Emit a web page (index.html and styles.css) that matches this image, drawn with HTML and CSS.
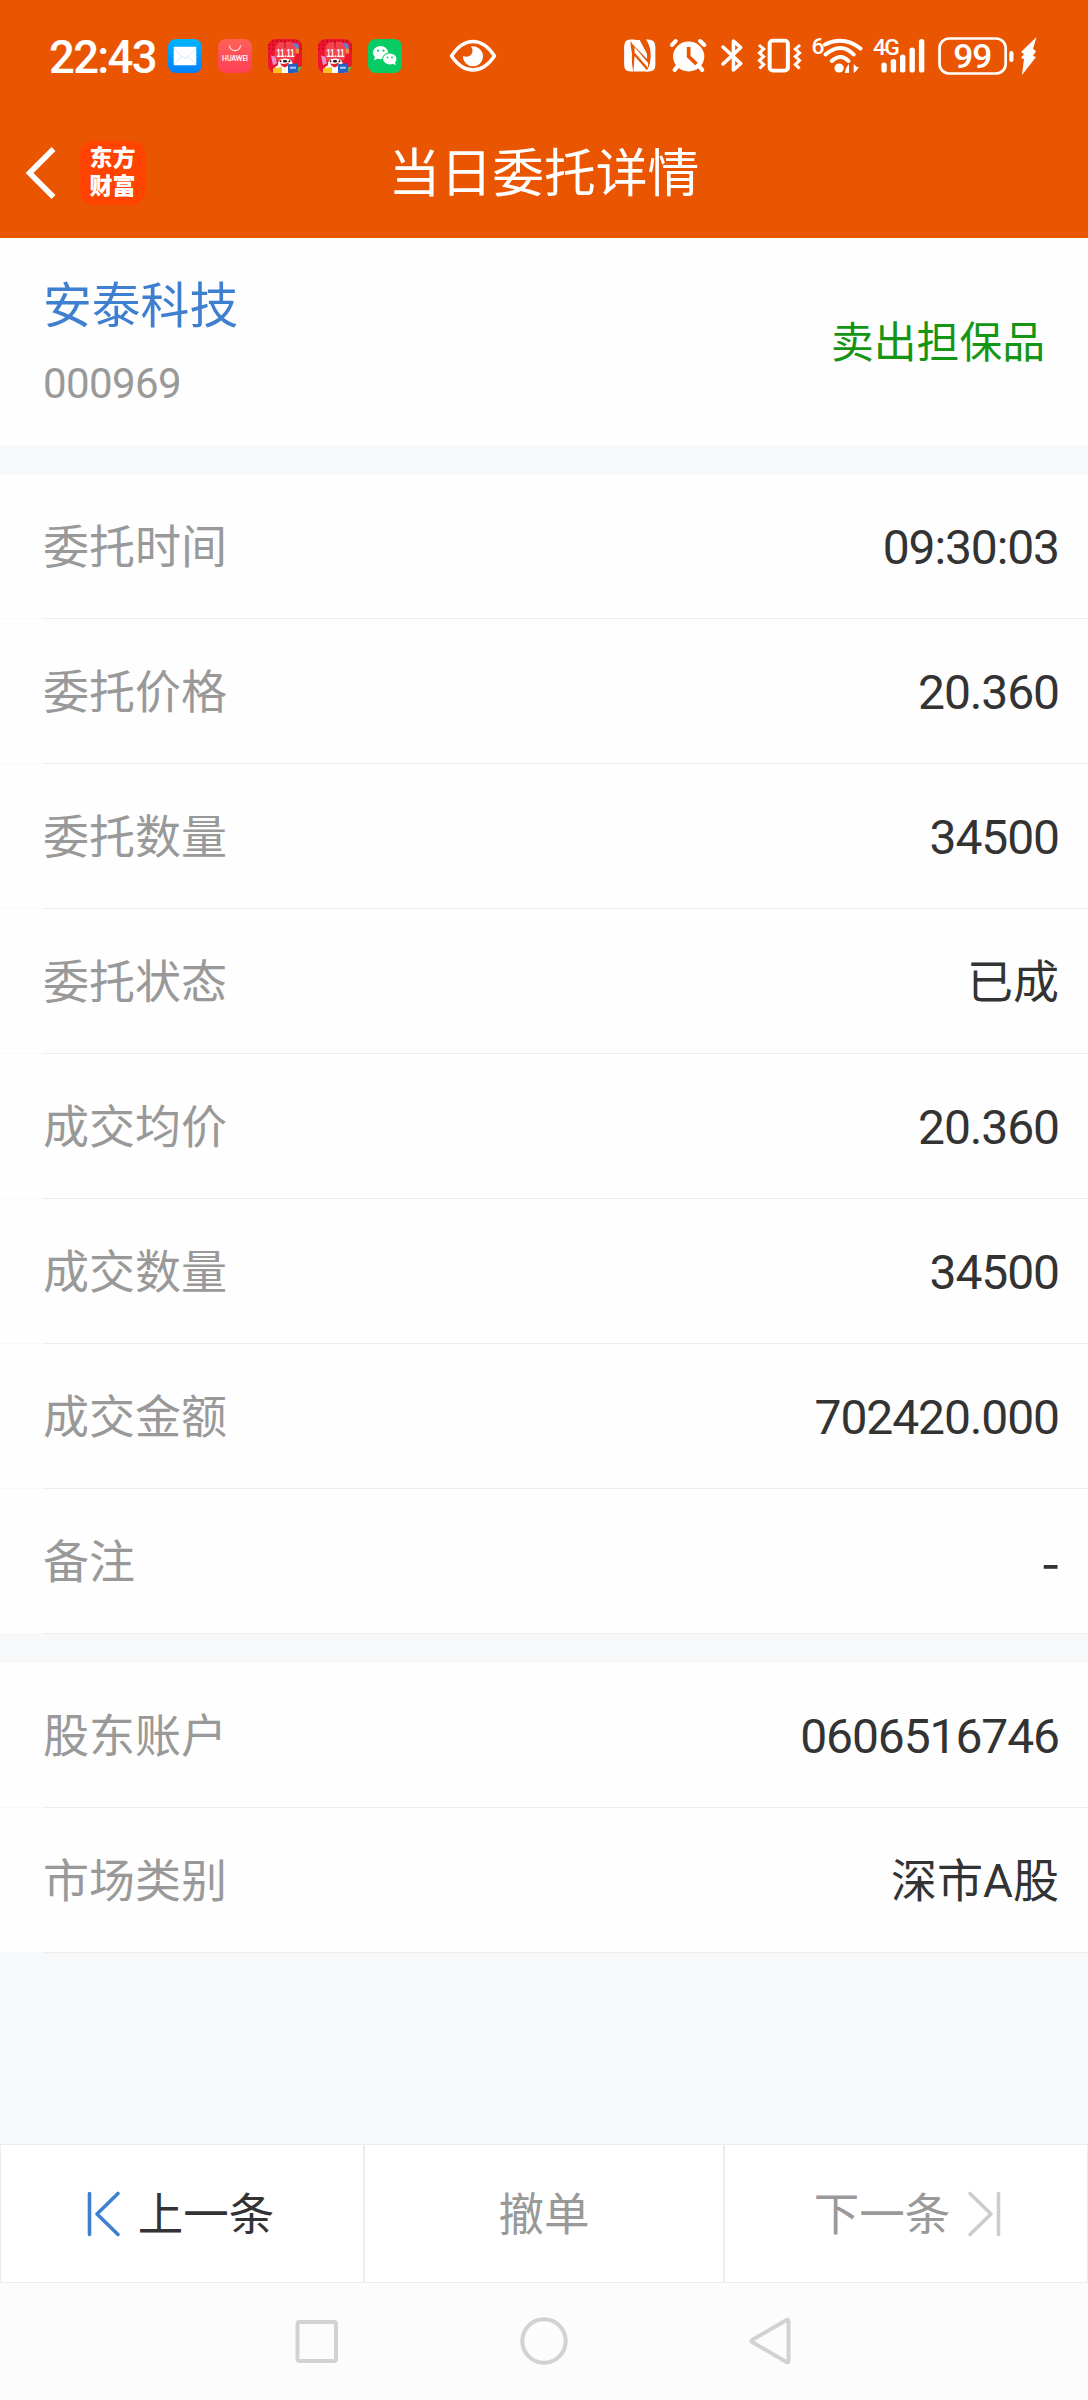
FILE: index.html
```html
<!DOCTYPE html>
<html lang="zh-CN">
<head>
  <meta charset="UTF-8">
  <title>当日委托详情</title>
  <link rel="stylesheet" href="styles.css">
</head>
<body>
  <header>
    <div class="status-bar">
      <span class="clock">22:43</span>
      <div class="apps">
        <svg width="34" height="34" viewBox="0 0 34 35" preserveAspectRatio="none">
          <defs><linearGradient id="mail" x1="0" y1="0" x2="0" y2="1"><stop offset="0" stop-color="#00b4fc"/><stop offset="1" stop-color="#0480fa"/></linearGradient></defs>
          <rect width="34" height="35" rx="8" fill="url(#mail)"/>
          <rect x="5.5" y="8" width="23" height="19" rx="1" fill="#fff"/>
          <path d="M6 10l9 9q2 2 4 0l9-9M6 26l8-8M28 26l-8-8" fill="none" stroke="#cfe6fb"/>
          <path d="M5.5 9v18M28.5 9v18" stroke="#0a9afb" stroke-dasharray="1 1.5"/>
        </svg>
        <svg width="34" height="34" viewBox="0 0 34 35" preserveAspectRatio="none">
          <defs><linearGradient id="store" x1="0" y1="0" x2="0" y2="1"><stop offset="0" stop-color="#ff6058"/><stop offset="1" stop-color="#ff4055"/></linearGradient></defs>
          <rect width="34" height="35" rx="8" fill="url(#store)"/>
          <path d="M11.5 6.5a5.5 5.5 0 0 0 11 0" fill="none" stroke="#ffe4e0" stroke-width="1.1"/>
          <text x="4" y="23" class="store-text" textLength="26" lengthAdjust="spacingAndGlyphs">HUAWEI</text>
        </svg>
        <svg width="34" height="34" viewBox="0 0 34 35" preserveAspectRatio="none">
          <defs>
            <clipPath id="tile"><rect width="34" height="35" rx="8"/></clipPath>
            <g id="sale" clip-path="url(#tile)">
              <rect width="34" height="35" fill="#ee1530"/>
              <path d="M0 2h34M0 6h34M0 10h34" stroke="#c80f20" stroke-width="2" stroke-dasharray="2 2"/>
              <path d="M25 4l5 1 1 7-5 2z" fill="#4c8ce0"/>
              <path d="M26 10h5v5h-5z" fill="#f58a2c"/>
              <path d="M7 22q-1-10 1-15 3-6 9-3 7-4 10 4 2 6-1 14z" fill="#f4434c"/>
              <path d="M17 3v6" stroke="#b90f25"/>
              <path d="M3 17l4 1 2 7-4 2z" fill="#ec8fc8"/>
              <path d="M5 35q0-6 5-8-1-7 7-7t8 7q4 3 4 8z" fill="#fff"/>
              <text x="17.5" y="18.5" class="sale-text" textLength="18" lengthAdjust="spacingAndGlyphs">11.11</text>
              <circle cx="12.5" cy="23" r="1" fill="#2a1518"/>
              <circle cx="21.5" cy="23" r="1" fill="#2a1518"/>
              <ellipse cx="17" cy="23" rx="2.2" ry="1.3" fill="#2a1518"/>
              <path d="M12 25q5 2 9-1-1 5-4 5t-5-4z" fill="#e3242c"/>
              <path d="M5 30l9-1v6H5z" fill="#fbc31d"/>
              <path d="M20 26l10-1v10H20z" fill="#2461c4"/>
              <path d="M22 29.500h6" stroke="#a8cdf5" stroke-width="2"/>
              <path d="M30 29l4-1v5l-4 2z" fill="#69b345"/>
            </g>
          </defs>
          <use href="#sale"/>
        </svg>
        <svg width="34" height="34" viewBox="0 0 34 35" preserveAspectRatio="none"><use href="#sale"/></svg>
        <svg width="34" height="34" viewBox="0 0 34 35" preserveAspectRatio="none">
          <rect width="34" height="35" rx="8" fill="#07cc66"/>
          <path d="M7 18l-1 4 4-2z" fill="#fff"/>
          <ellipse cx="12.5" cy="14" rx="7.6" ry="6.8" fill="#fff"/>
          <ellipse cx="21.8" cy="20.5" rx="7.6" ry="6.6" fill="#07cc66"/>
          <ellipse cx="21.8" cy="20.5" rx="6.7" ry="5.7" fill="#fff"/>
          <path d="M24 25l3.500 2-.5-4z" fill="#fff"/>
          <g fill="#07cc66"><circle cx="10" cy="12" r="1.1"/><circle cx="15.5" cy="12" r="1.1"/><circle cx="19.5" cy="19" r=".9"/><circle cx="24" cy="19" r=".9"/></g>
        </svg>
      </div>
      <svg class="eye" width="48" height="34" viewBox="0 0 48 34">
        <path d="M2.500 17Q12 2.500 24 2.500T45.500 17Q36 31 24 31T2.500 17z" fill="none" stroke="#fff" stroke-width="3.4" stroke-linejoin="round"/>
        <path d="M22 7.500a10 10 0 1 1-8 9.500q5 2 8-1 3-4 0-8.500z" fill="#fff"/>
      </svg>

      <div class="system">
        <svg class="signals" width="406" height="44" viewBox="0 0 390 44" preserveAspectRatio="none">
          <!-- nfc -->
          <path d="M14 6.500H9q-6 0-6 7v18q0 7 6 7h3q-2-7-1.500-18Q9 11 9 9z" fill="#fff"/>
          <path d="M24 6.500h2q7 0 7 7v18q0 7-6 7h-3q4-5 4.500-14 .5-11-4.500-18z" fill="#fff"/>
          <path d="M10 7h8l7 14v5L10 10zM13 14l13 16v5L13 19.500zM13 23l13 15.500H12z" fill="#fff"/>
          <!-- alarm -->
          <path d="M49 12l3.500-4M80 12l-4-4M51.500 37l3-4M78 37l-3-4" fill="none" stroke="#fff" stroke-width="4" stroke-linecap="round"/>
          <circle cx="65" cy="23.500" r="15" fill="#fff"/>
          <path d="M65 14v9.500l7.500 7.500" fill="none" stroke="#ea5502" stroke-width="3.6"/>
          <!-- bluetooth -->
          <path d="M98 14l17 16.500-7 6.500V8l7 6.500-17 16.500" fill="none" stroke="#fff" stroke-width="3.4" stroke-linecap="round" stroke-linejoin="round"/>
          <!-- vibrate -->
          <rect x="142.800" y="7.600" width="17.500" height="30" rx="3" fill="none" stroke="#fff" stroke-width="3.8"/>
          <path d="M132.500 12l4.500 4-4 4 4 3.500-4 4 4 4-4 4M172 12l-4.500 4 4 4-4 3.500 4 4-4 4 4 4" fill="none" stroke="#fff" stroke-width="3"/>
          <!-- wifi -->
          <text x="183" y="20.500" class="mini">6</text>
          <path d="M196 11.500q18-9 34 4M196.500 21.500q15-13 27 0M202.500 28q9-8 16 0" fill="none" stroke="#fff" stroke-width="4" stroke-linecap="round"/>
          <circle cx="209.500" cy="35" r="4.500" fill="#fff"/>
          <path d="M219 31v9h-4q1-6 4-9zM223.500 31v9q3-2 5-6h-2z" fill="#fff"/>
          <!-- signal -->
          <text x="242" y="22" class="mini">4G</text>
          <path d="M252.700 32v5M261.700 28.500v8.500M270.600 24v13M279.700 17v20M288.800 8.500v28.500" stroke="#fff" stroke-width="5.2" stroke-linecap="round"/>
          <!-- battery -->
          <rect x="306" y="5.500" width="63.500" height="35" rx="9.500" fill="none" stroke="#fff" stroke-width="2.6"/>
          <path d="M375 20v7" stroke="#fff" stroke-width="4" stroke-linecap="round"/>
          <text x="337.500" y="35" class="level">99</text>
        </svg>
        <svg class="bolt" width="17" height="38" viewBox="0 0 17 38"><path d="M16.500 0L1 15l3 2-3 4 3 1-2 16 14-18-3-1 3-5-3-2z" fill="#fff"/></svg>
      </div>
    </div>

    <div class="title-bar">
      <svg class="back" width="32" height="54" viewBox="0 0 32 54"><path d="M28.500 3L4.500 27l24 24" fill="none" stroke="#fff" stroke-width="5.5"/></svg>
      <div class="logo">东方<br>财富</div>
      <h1>当日委托详情</h1>
    </div>
  </header>

  <section class="stock">
    <div>
      <div class="stock-name">安泰科技</div>
      <div class="stock-code">000969</div>
    </div>
    <div class="side">卖出担保品</div>
  </section>

  <section class="rows">
    <div class="row"><span class="label">委托时间</span><span class="value">09:30:03</span></div>
    <div class="row"><span class="label">委托价格</span><span class="value">20.360</span></div>
    <div class="row"><span class="label">委托数量</span><span class="value">34500</span></div>
    <div class="row"><span class="label">委托状态</span><span class="value text">已成</span></div>
    <div class="row"><span class="label">成交均价</span><span class="value">20.360</span></div>
    <div class="row"><span class="label">成交数量</span><span class="value">34500</span></div>
    <div class="row"><span class="label">成交金额</span><span class="value">702420.000</span></div>
    <div class="row"><span class="label">备注</span><span class="value dash">-</span></div>
  </section>

  <section class="rows">
    <div class="row"><span class="label">股东账户</span><span class="value">0606516746</span></div>
    <div class="row"><span class="label">市场类别</span><span class="value text">深市A股</span></div>
  </section>

  <div class="actions">
    <div class="action prev">
      <svg width="36" height="48" viewBox="0 0 36 48"><path d="M3.500 3.500v41M32 3.500L11 24l21 20.500" fill="none" stroke="#3e7fd0" stroke-width="3.6" stroke-linecap="round" stroke-linejoin="round"/></svg>
      <span>上一条</span>
    </div>
    <div class="action"><span>撤单</span></div>
    <div class="action next">
      <span>下一条</span>
      <svg width="36" height="48" viewBox="0 0 36 48"><path d="M32.500 3.500v41M4 3.500L25 24 4 44.500" fill="none" stroke="#ccc" stroke-width="3.6" stroke-linecap="round" stroke-linejoin="round"/></svg>
    </div>
  </div>

  <nav>
    <svg width="48" height="48" viewBox="0 0 48 48"><rect x="4.500" y="5" width="38.500" height="39" rx="2"/></svg>
    <svg width="48" height="48" viewBox="0 0 48 48"><circle cx="24" cy="24" r="21.700"/></svg>
    <svg width="48" height="48" viewBox="0 0 48 48"><path d="M41.500 4v40q0 2-2 1L5 25q-1-1 0-2L39.500 3q2-1 2 1z"/></svg>
  </nav>
</body>
</html>
```
FILE: styles.css
```css
* {
  box-sizing: border-box;
}

body {
  margin: 0;
  height: 2400px;
  display: flex;
  flex-direction: column;
  background: #f7f8fa;
  color: #333;
  font-family: Roboto, "Noto Sans CJK SC", sans-serif;
  overflow: hidden;
}

header {
  height: 238px;
  background: #ea5502;
  color: #fff;
}

.status-bar {
  height: 112px;
  display: flex;
  align-items: center;
  padding-left: 49px;
}

.clock {
  width: 112px;
  padding-top: 2px;
  font-size: 45.5px;
  font-weight: 500;
  letter-spacing: -1.7px;
}

.apps {
  display: flex;
  gap: 16px;
  padding-left: 7px;
}

.store-text {
  font: bold 7px Lato, sans-serif;
  fill: #fff;
}

.sale-text {
  font: bold 11px "Liberation Sans", sans-serif;
  fill: #fff;
  text-anchor: middle;
}

.eye {
  margin-left: 47px;
}

.system {
  display: flex;
  align-items: center;
  margin-left: 124px;
}

.mini {
  font: 500 22px Roboto, sans-serif;
  letter-spacing: -1.5px;
  fill: #fff;
}

.level {
  font: 500 34px Roboto, sans-serif;
  letter-spacing: -1px;
  fill: #fff;
  text-anchor: middle;
}

.signals {
  margin-bottom: 2px;
}

.bolt {
  margin-left: -7px;
}

.title-bar {
  position: relative;
  height: 121px;
  display: flex;
  align-items: center;
  padding-left: 25px;
}

.logo {
  width: 65px;
  height: 64px;
  margin-left: 23px;
  padding-top: 4px;
  border-radius: 13px;
  background: #ff4402;
  font-size: 23px;
  font-weight: 900;
  line-height: 28px;
  text-align: center;
}

h1 {
  position: absolute;
  left: 0;
  right: 0;
  margin: 0;
  padding-top: 5px;
  font-size: 51.8px;
  font-weight: 400;
  line-height: 60px;
  text-align: center;
}

.stock {
  height: 207px;
  display: flex;
  justify-content: space-between;
  align-items: center;
  padding: 0 43px;
  background: #fefefe;
}

.stock-name {
  padding-top: 6px;
  color: #3e7fd0;
  font-size: 48.8px;
  line-height: 70px;
}

.stock-code {
  margin-top: 9px;
  color: #999;
  font-size: 42px;
  line-height: 66px;
  letter-spacing: -0.6px;
}

.side {
  padding-bottom: 6px;
  color: #149614;
  font-size: 42.8px;
}

.rows {
  margin-top: 29px;
}

.row {
  height: 145px;
  display: flex;
  justify-content: space-between;
  align-items: center;
  padding: 0 29px 0 43px;
  background: linear-gradient(90deg, #f7f8fa 43px, #ededed 43px) bottom / 100% 1px no-repeat #fefefe;
}

.label {
  padding-bottom: 7px;
  color: #999;
  font-size: 46px;
}

.value {
  padding-top: 2px;
  font-size: 48px;
  letter-spacing: -1.1px;
}

.text {
  padding: 0 0 7px;
  font-size: 46px;
  letter-spacing: 0;
}

.dash {
  padding: 0 0 6px;
  font-family: "Noto Sans CJK SC", sans-serif;
  font-size: 54px;
}

.actions {
  height: 139px;
  display: flex;
  margin-top: auto;
}

.action {
  flex: 1;
  display: flex;
  align-items: center;
  justify-content: center;
  border: 1px solid #ededed;
  background: #fff;
  color: #999;
  font-size: 45.5px;
}

.action span {
  padding-bottom: 5px;
}

.prev {
  padding-right: 4px;
  color: #333;
}

.prev svg {
  margin-right: 16px;
}

.next {
  padding-left: 4px;
}

.next svg {
  margin-left: 16px;
}

nav {
  height: 117px;
  display: flex;
  justify-content: center;
  gap: 179px;
  padding-top: 34px;
  background: #fcfcfc;
}

nav svg {
  fill: none;
  stroke: #d2d2d2;
  stroke-width: 4;
}
```
